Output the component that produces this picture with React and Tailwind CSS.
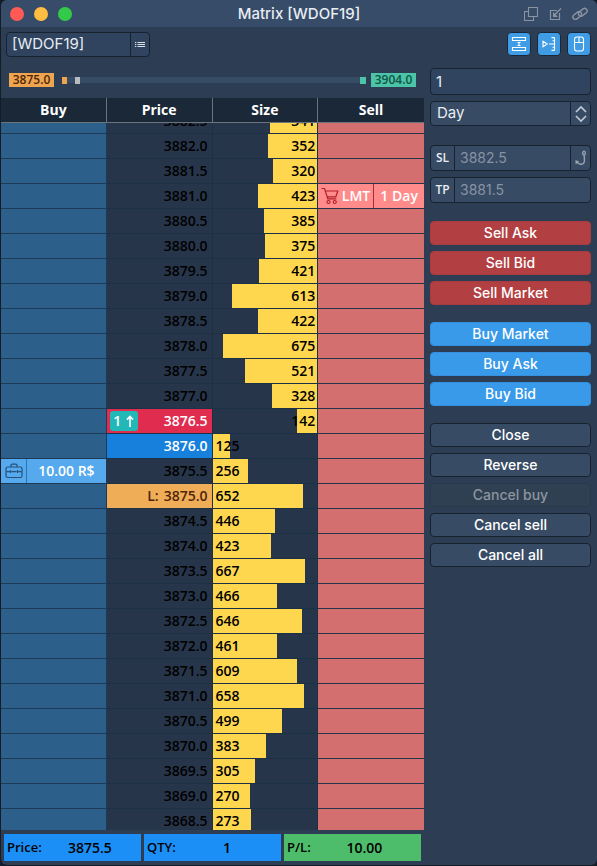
import React from "react";

const asks = [
  ["3882.5", 341],
  ["3882.0", 352],
  ["3881.5", 320],
  ["3881.0", 423],
  ["3880.5", 385],
  ["3880.0", 375],
  ["3879.5", 421],
  ["3879.0", 613],
  ["3878.5", 422],
  ["3878.0", 675],
  ["3877.5", 521],
  ["3877.0", 328],
  ["3876.5", 142],
];

const bids = [
  ["3876.0", 125],
  ["3875.5", 256],
  ["3875.0", 652],
  ["3874.5", 446],
  ["3874.0", 423],
  ["3873.5", 667],
  ["3873.0", 466],
  ["3872.5", 646],
  ["3872.0", 461],
  ["3871.5", 609],
  ["3871.0", 658],
  ["3870.5", 499],
  ["3870.0", 383],
  ["3869.5", 305],
  ["3869.0", 270],
  ["3868.5", 273],
];

const rows = [
  ...asks.map(([price, size]) => ({ price, size, side: "ask" })),
  ...bids.map(([price, size]) => ({ price, size, side: "bid" })),
];

const FULL_SIZE = 752;

const priceStyles = {
  "3876.5": "bg-[#e02c4e] text-white",
  "3876.0": "bg-[#177fdc] text-white",
  "3875.0": "bg-[#efad58] text-[#4f2508]",
};

function CartIcon() {
  return (
    <svg viewBox="0 0 18 18" className="h-[18px] w-[18px] shrink-0" fill="none" stroke="#b3202a" strokeWidth="1.2">
      <path d="M.5 1.500h3L6.800 11.800M4.200 4h12.600l-2 5.800H6M6.300 11.800h9" />
      <circle cx="7.500" cy="15" r="1.500" />
      <circle cx="13.800" cy="15" r="1.500" />
    </svg>
  );
}

function BriefcaseIcon() {
  return (
    <svg viewBox="0 0 18 16" className="h-4 w-[18px]" fill="none" stroke="#24527c" strokeWidth="1.2">
      <rect x="1" y="4" width="16" height="10.5" rx="1.8" />
      <path d="M6 4V2.400C6 1.600 6.400 1.200 7.200 1.200h3.600c.8 0 1.200.4 1.200 1.200V4M1.500 8.600h3.200M6.400 8.600h5.200M13.300 8.600h3.200M5.500 7v3M12.500 7v3" />
    </svg>
  );
}

function SizeCell({ size, side }) {
  const ask = side === "ask";
  return (
    <div
      className={
        ask
          ? "relative flex h-6 shrink-0 items-center justify-end"
          : "relative flex h-6 shrink-0 items-center justify-start"
      }
    >
      <div className="h-full bg-[#ffd74f]" style={{ width: `${(size / FULL_SIZE) * 100}%` }} />
      <span className={ask ? "absolute right-[2px]" : "absolute left-[3px]"}>{size}</span>
    </div>
  );
}

function PriceCell({ price }) {
  const tone = priceStyles[price] || "text-black";
  return (
    <div className={`flex h-6 shrink-0 items-center justify-end pr-1 ${tone}`}>
      {price === "3876.5" && (
        <span className="mr-auto ml-[3px] flex h-5 w-7 items-center justify-center gap-[5px] rounded-[3px] bg-[#22b8b8]">
          1
          <svg viewBox="0 0 8 12" className="h-3 w-2" fill="none" stroke="currentColor" strokeWidth="1.6">
            <path d="M4 12V2M1 4.6 4 1.4l3 3.2" />
          </svg>
        </span>
      )}
      {price === "3875.0" && <span className="mr-[5px]">L:</span>}
      <span>{price}</span>
    </div>
  );
}

function Row({ row, first }) {
  const clip = first ? "flex h-[10px] flex-col justify-end overflow-hidden" : "h-6";
  return (
    <tr>
      <td className="border-r border-b border-[#1d3a56] bg-[#2d5f8b] p-0">
        <div className={clip}>
          {row.price === "3875.5" && (
            <div className="flex h-6 bg-[#55a9ec] text-white">
              <div className="flex w-[26px] items-center justify-center border-r border-[#2d75b5]">
                <BriefcaseIcon />
              </div>
              <div className="flex flex-1 items-center justify-center">10.00 R$</div>
            </div>
          )}
        </div>
      </td>
      <td className="border-r border-b border-[#1c3046] bg-[#27354a] p-0">
        <div className={clip}>
          <PriceCell price={row.price} />
        </div>
      </td>
      <td className="border-r border-b border-[#1c3046] bg-[#27354a] p-0 text-black">
        <div className={clip}>
          <SizeCell size={row.size} side={row.side} />
        </div>
      </td>
      <td className="border-b border-[#27354a] bg-[#d3706f] p-0">
        <div className={clip}>
          {row.price === "3881.0" && (
            <div className="flex h-6 bg-[#ff8b8b] text-white">
              <div className="flex w-14 items-center justify-end gap-[3px] border-r border-[#a82c35] pr-[3px]">
                <CartIcon />
                LMT
              </div>
              <div className="flex flex-1 items-center justify-center whitespace-nowrap">1 Day</div>
            </div>
          )}
        </div>
      </td>
    </tr>
  );
}

function ToolButton({ label, children }) {
  return (
    <button
      type="button"
      aria-label={label}
      className="flex h-6 w-6 items-center justify-center rounded-[4px] border border-[#1a2738] bg-[#409ce4]"
    >
      <svg viewBox="0 0 18 18" className="h-[18px] w-[18px] shrink-0" fill="none" stroke="white" strokeWidth="1.1">
        {children}
      </svg>
    </button>
  );
}

function ActionButton({ tone, disabled, children }) {
  const tones = {
    sell: "border-[#a93c40] bg-[#b23f42] text-white",
    buy: "border-[#3591df] bg-[#389ae9] text-white",
    plain: "border-[#17222f] bg-[#374b65] text-white",
    off: "border-[#29384b] bg-[#304053] text-[#8d959e]",
  };
  return (
    <button
      type="button"
      disabled={disabled}
      className={`flex h-6 w-full items-center justify-center rounded-[4px] border text-sm font-medium ${tones[tone]}`}
    >
      {children}
    </button>
  );
}

function Total({ label, value, tone }) {
  return (
    <div className={`flex flex-1 items-center px-[3px] text-black ${tone}`}>
      <span className="text-[13px]">{label}</span>
      <span className="flex-1 text-center">{value}</span>
    </div>
  );
}

const field = "flex w-full overflow-hidden rounded-[4px] border border-[#17222f] bg-[#374b65]";

export default function App() {
  return (
    <div className="h-screen bg-[#141c28] pb-px pl-px font-['Inter','Liberation_Sans',sans-serif]">
      <div className="flex h-full flex-col overflow-hidden rounded-md bg-[#2d3d54] text-[#e8edf3]">
        <header className="flex h-[27px] shrink-0 items-center bg-[#364c69] px-[9px]">
          <div className="flex flex-1 gap-[10px]">
            <span className="h-[14px] w-[14px] rounded-full bg-[#ff5a56]" />
            <span className="h-[14px] w-[14px] rounded-full bg-[#ffbe41]" />
            <span className="h-[14px] w-[14px] rounded-full bg-[#34ca49]" />
          </div>
          <h1 className="text-[15px] leading-[27px] font-medium">Matrix [WDOF19]</h1>
          <div className="flex flex-1 items-center justify-end gap-[10px] text-[#8994a0]">
            <svg viewBox="0 0 14 14" className="h-[14px] w-[14px]" fill="none" stroke="currentColor" strokeWidth="1.1">
              <path d="M4.500.5h9v9h-9zM4 4.500H.5v9h9V10" />
            </svg>
            <svg viewBox="0 0 14 14" className="h-[14px] w-[14px]" fill="none" stroke="currentColor" strokeWidth="1.2">
              <path d="M9 3.500H2.500v9h9V6M13 1.500 7 7.500" />
              <path d="M5 5v5h5z" fill="currentColor" stroke="none" />
            </svg>
            <svg viewBox="0 0 16 14" className="h-[14px] w-4" fill="none" stroke="currentColor" strokeWidth="1.4">
              <rect x="0.4" y="6" width="9.600" height="5" rx="2.500" transform="rotate(-38 5.200 8.500)" />
              <rect x="6" y="2.800" width="9.600" height="5" rx="2.500" transform="rotate(-38 10.800 5.300)" />
            </svg>
          </div>
        </header>

        <div className="flex shrink-0 justify-between pt-[5px] pr-[6px] pl-[5px]">
          <div className="flex h-[25px] w-36 overflow-hidden rounded-[4px] border border-[#17222f] bg-[#30445f]">
            <input
              aria-label="Symbol"
              defaultValue="[WDOF19]"
              className="min-w-0 flex-1 bg-transparent px-[5px] text-[15px] outline-none"
            />
            <button
              type="button"
              aria-label="Symbol list"
              className="flex w-[19px] items-center justify-center border-l border-[#17222f]"
            >
              <svg viewBox="0 0 10 8" className="h-2 w-[10px]" fill="none" stroke="#dbe2ea" strokeWidth="1">
                <path d="M0 1.500h1.300M0 3.500h1.300M0 5.500h1.300M2.500 1.500H10M2.500 3.500H10M2.500 5.500H10" />
              </svg>
            </button>
          </div>
          <div className="flex gap-[6px]">
            <ToolButton label="Center price">
              <path d="M2.500 2.500h13v3h-13zM2.500 12.500h13v3h-13zM9 7v4M7.500 7.500h3M7.500 10.500h3" />
            </ToolButton>
            <ToolButton label="Price scale">
              <path d="M3 6.200v5.600l4.200-2.800zM9 9h6M14.500 2.400v13.200M11.500 2.600h3M11.500 15.400h3M12.500 5.800h2M12.500 12.200h2" />
            </ToolButton>
            <ToolButton label="Mouse trading">
              <rect x="4.500" y="2" width="9" height="14" rx="2.400" />
              <path d="M9 2v5.500M4.500 7.500h9" />
            </ToolButton>
          </div>
        </div>

        <main className="flex min-h-0 flex-1 gap-[6px] pt-[11px] pr-[6px]">
          <section className="flex min-w-0 flex-1 flex-col font-['Open_Sans','Noto_Sans',sans-serif]">
            <div className="mt-[5px] mb-[11px] flex h-[14px] shrink-0 items-center px-2 text-xs font-semibold">
              <span className="flex h-[14px] w-[45px] items-center justify-center bg-[#efa54f] text-[#4f2508]">3875.0</span>
              <div className="mr-[5px] ml-2 flex h-[6px] flex-1 items-center bg-[#354b66]">
                <span className="h-[7px] w-[5px] bg-[#efa54f]" />
                <span className="ml-2 h-[7px] w-[5px] bg-[#b9bcbf]" />
                <span className="ml-auto h-[7px] w-[6px] bg-[#4cc4a7]" />
              </div>
              <span className="flex h-[14px] w-[45px] items-center justify-center bg-[#4cc4a7] text-[#0e5544]">3904.0</span>
            </div>

            <div className="min-h-0 flex-1 overflow-hidden">
              <table className="w-full table-fixed border-separate border-spacing-0 text-sm leading-5 font-semibold">
                <thead>
                  <tr className="h-[25px] text-white">
                    <th className="border-r border-b border-[#69747f] bg-[#1b2837] p-0">Buy</th>
                    <th className="border-r border-b border-[#69747f] bg-[#1b2837] p-0">Price</th>
                    <th className="border-r border-b border-[#69747f] bg-[#1b2837] p-0">Size</th>
                    <th className="border-b border-[#69747f] bg-[#1b2837] p-0">Sell</th>
                  </tr>
                </thead>
                <tbody>
                  {rows.map((row, i) => (
                    <Row key={row.price} row={row} first={i === 0} />
                  ))}
                </tbody>
              </table>
            </div>

            <footer className="mt-1 mb-1 flex h-[27px] shrink-0 gap-[3px] px-[3px] text-sm font-semibold">
              <Total label="Price:" value="3875.5" tone="bg-[#1b8ff5]" />
              <Total label="QTY:" value="1" tone="bg-[#1b8ff5]" />
              <Total label="P/L:" value="10.00" tone="bg-[#4ebd6b]" />
            </footer>
          </section>

          <aside className="w-[161px] shrink-0 text-[15px]">
            <input
              aria-label="Quantity"
              defaultValue="1"
              className="block h-[27px] w-full rounded-[4px] border border-[#17222f] bg-[#30445f] px-[5px] outline-none"
            />
            <div className={`${field} mt-[6px] h-[25px]`}>
              <select
                aria-label="Validity"
                className="min-w-0 flex-1 appearance-none bg-transparent px-[6px] outline-none"
              >
                <option>Day</option>
              </select>
              <span className="flex w-5 items-center justify-center border-l border-[#17222f]">
                <svg viewBox="0 0 12 18" className="h-[18px] w-3" fill="none" stroke="#c3cbd4" strokeWidth="1.6">
                  <path d="m1 7 5-5 5 5M1 11l5 5 5-5" />
                </svg>
              </span>
            </div>

            <div className={`${field} mt-[19px] h-[26px]`}>
              <label
                htmlFor="stop-loss"
                className="flex w-6 items-center justify-center border-r border-[#17222f] font-['Open_Sans'] text-xs font-semibold"
              >
                SL
              </label>
              <input
                id="stop-loss"
                placeholder="3882.5"
                className="min-w-0 flex-1 px-[5px] text-sm outline-none placeholder:text-[#8893a1]"
              />
              <button
                type="button"
                aria-label="Trailing stop"
                className="flex w-5 items-center justify-center border-l border-[#17222f]"
              >
                <svg viewBox="0 0 12 16" className="h-4 w-3" fill="none" stroke="#9aa4af" strokeWidth="1.4">
                  <ellipse cx="9" cy="3.2" rx="1.3" ry="2" />
                  <path d="M9.300 5.200c-.4 3 1 5.300-.4 7.600C7.500 15 3.500 14.800 1.500 11.500M1.200 13.800V11l2.600 1.200" />
                </svg>
              </button>
            </div>
            <div className={`${field} mt-[6px] h-[26px]`}>
              <label
                htmlFor="take-profit"
                className="flex w-6 items-center justify-center border-r border-[#17222f] font-['Open_Sans'] text-xs font-semibold"
              >
                TP
              </label>
              <input
                id="take-profit"
                placeholder="3881.5"
                className="min-w-0 flex-1 px-[5px] text-sm outline-none placeholder:text-[#8893a1]"
              />
            </div>

            <div className="mt-[18px] flex flex-col gap-[6px]">
              <ActionButton tone="sell">Sell Ask</ActionButton>
              <ActionButton tone="sell">Sell Bid</ActionButton>
              <ActionButton tone="sell">Sell Market</ActionButton>
            </div>
            <div className="mt-[17px] flex flex-col gap-[6px]">
              <ActionButton tone="buy">Buy Market</ActionButton>
              <ActionButton tone="buy">Buy Ask</ActionButton>
              <ActionButton tone="buy">Buy Bid</ActionButton>
            </div>
            <div className="mt-[17px] flex flex-col gap-[6px]">
              <ActionButton tone="plain">Close</ActionButton>
              <ActionButton tone="plain">Reverse</ActionButton>
              <ActionButton tone="off" disabled>Cancel buy</ActionButton>
              <ActionButton tone="plain">Cancel sell</ActionButton>
              <ActionButton tone="plain">Cancel all</ActionButton>
            </div>
          </aside>
        </main>
      </div>
    </div>
  );
}
